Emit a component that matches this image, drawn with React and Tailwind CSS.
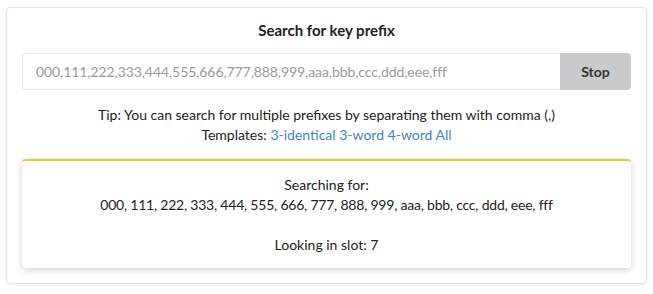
import React from 'react';

const prefixes = ['000', '111', '222', '333', '444', '555', '666', '777', '888', '999', 'aaa', 'bbb', 'ccc', 'ddd', 'eee', 'fff'];
const templates = ['3-identical', '3-word', '4-word', 'All'];

export default function App() {
  return (
    <div className="bg-white p-[6px] pt-[7px] font-['Lato','Liberation_Sans',sans-serif] text-[#222]">
      <div className="rounded border border-[#e3e3e3] shadow-[0_1px_3px_rgba(0,0,0,0.08)] px-[15px] pt-[12px] pb-[15px]">
        <h2 className="text-center text-[15px] font-bold leading-[20px]">Search for key prefix</h2>

        <div className="mt-[13px] flex h-[37px]">
          <input
            className="flex-1 min-w-0 rounded-l border border-r-0 border-[#e6e6e6] px-[13px] text-[14px] tracking-[-0.08px] text-[#333] placeholder:text-[#9a9a9a] outline-none"
            placeholder={prefixes.join(',')}
          />
          <button className="w-[71px] rounded-r bg-[#c8cacb] text-[14px] font-bold text-[#333]">Stop</button>
        </div>

        <div className="mt-[15px] text-center text-[14px] leading-[20px]">
          <p>Tip: You can search for multiple prefixes by separating them with comma (,)</p>
          <p>
            Templates:{' '}
            {templates.map((t, i) => (
              <span key={t}>
                <a className="text-[#3d87c3] cursor-pointer">{t}</a>
                {i < templates.length - 1 ? ' ' : ''}
              </span>
            ))}
          </p>
        </div>

        <div className="mt-[14px] rounded border-t-2 border-[#eec643] bg-white shadow-[0_2px_6px_rgba(0,0,0,0.18)] pt-[14px] pb-[13px] text-center text-[14px] leading-[20px]">
          <p>Searching for:</p>
          <p className="tracking-[-0.22px]">{prefixes.join(', ')}</p>
          <p className="mt-[20px]">Looking in slot: 7</p>
        </div>
      </div>
    </div>
  );
}
